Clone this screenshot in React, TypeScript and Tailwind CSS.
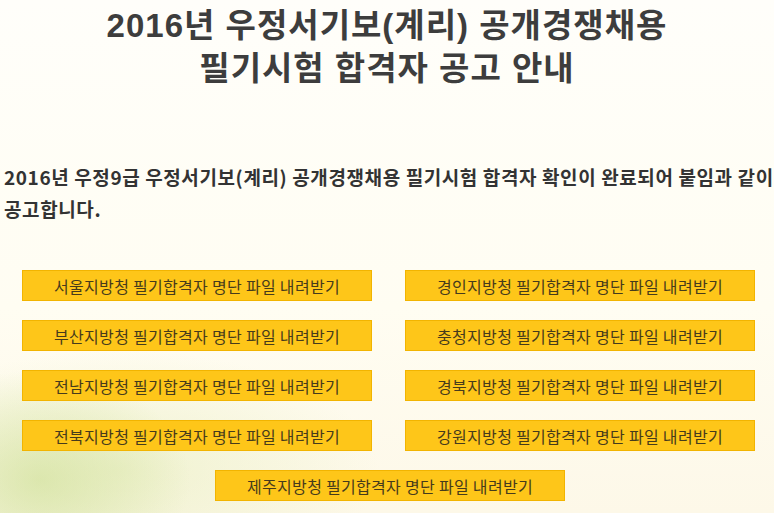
const offices = [
  "서울지방청",
  "경인지방청",
  "부산지방청",
  "충청지방청",
  "전남지방청",
  "경북지방청",
  "전북지방청",
  "강원지방청",
];

const DownloadButton = ({ office }: { office: string }) => (
  <a
    href="#"
    className="flex h-[31px] w-[350px] items-center justify-center border border-[#f2b400] bg-[#fec619] text-[16px] tracking-[0.3px] text-[#463b1c]"
  >
    {office} 필기합격자 명단 파일 내려받기
  </a>
);

export default function App() {
  return (
    <div
      className="min-h-[513px] w-full overflow-hidden bg-[radial-gradient(ellipse_150px_110px_at_40px_480px,rgba(200,220,140,0.55),transparent),radial-gradient(ellipse_260px_120px_at_120px_470px,rgba(225,235,180,0.5),transparent),linear-gradient(to_bottom,#fffefa_0%,#fffdf2_60%,#fdf8e8_100%)] pt-[4px] text-[#333]"
      style={{ fontFamily: '"Noto Sans CJK KR", "Noto Sans", sans-serif' }}
    >
      <h1
        className="text-center text-[33px] font-bold leading-[43px] tracking-[1px] text-[#3d3d3d]"
        style={{ fontFamily: '"Liberation Sans", "Noto Sans CJK KR", sans-serif' }}
      >
        <span className="block">2016년 우정서기보(계리) 공개경쟁채용</span>
        <span className="block">필기시험 합격자 공고 안내</span>
      </h1>

      <p className="mt-[71px] pl-[4px] text-[19px] font-bold leading-[32px] tracking-[0.6px] text-[#333]">
        <span className="block whitespace-nowrap">
          2016년 우정9급 우정서기보(계리) 공개경쟁채용 필기시험 합격자 확인이 완료되어 붙임과 같이
        </span>
        <span className="block">공고합니다.</span>
      </p>

      <div className="mt-[45px] grid grid-cols-[350px_350px] gap-x-[33px] gap-y-[19px] pl-[22px]">
        {offices.map((o) => (
          <DownloadButton key={o} office={o} />
        ))}
      </div>

      <div className="mt-[19px] flex pl-[215px]">
        <DownloadButton office="제주지방청" />
      </div>
    </div>
  );
}
